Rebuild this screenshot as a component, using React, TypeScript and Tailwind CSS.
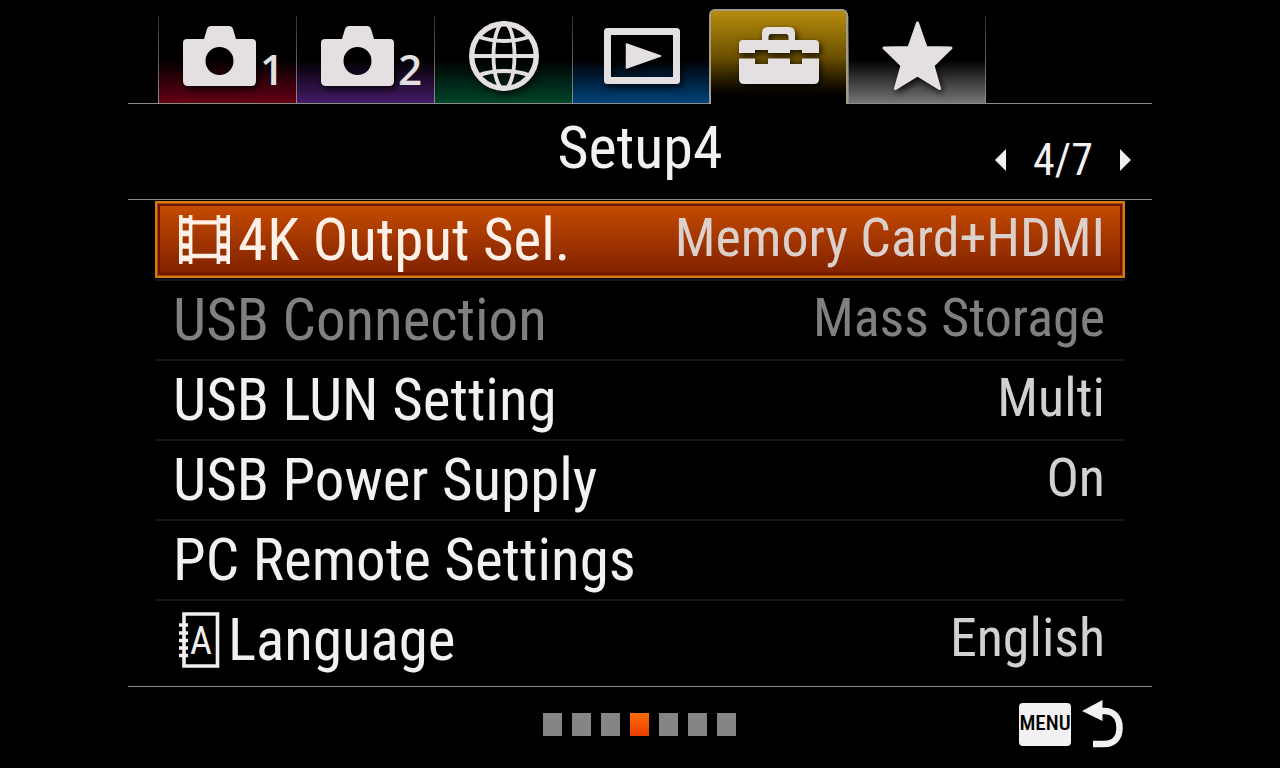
import { useState, type ReactNode } from "react";

const ICON = "drop-shadow-[2px_3px_3px_rgba(0,0,0,0.8)]";
const INK = "#e4e0e2";

function CameraIcon() {
  return (
    <svg width="73" height="60" viewBox="0 0 73 60" className={ICON} aria-hidden="true">
      <path
        fill={INK}
        fillRule="evenodd"
        d="M4 13H21L24 3Q25 0 28 0H46Q49 0 50 3L53 13H69Q73 13 73 17V55Q73 60 68 60H5Q0 60 0 55V17Q0 13 4 13ZM36.5 21A14 14 0 1 0 36.5 49A14 14 0 1 0 36.5 21Z"
      />
    </svg>
  );
}

function GlobeIcon() {
  return (
    <svg width="70" height="70" viewBox="0 0 70 70" fill="none" stroke={INK} strokeWidth="4" className={ICON} aria-hidden="true">
      <circle cx="35" cy="35" r="32.3" strokeWidth="5.4" />
      <ellipse cx="35" cy="35" rx="10.5" ry="33" strokeWidth="3.8" />
      <path d="M3 35H67M9 15.5Q21 20 35 20T61 15.5M9 54.5Q21 50 35 50T61 54.5" />
    </svg>
  );
}

function PlaybackIcon() {
  return (
    <svg width="76" height="56" viewBox="0 0 76 56" className={ICON} aria-hidden="true">
      <rect x="3.5" y="3.5" width="69" height="49" fill="none" stroke={INK} strokeWidth="7" strokeLinejoin="round" />
      <path fill={INK} stroke={INK} strokeWidth="1.5" strokeLinejoin="round" d="M22.5 16L56.5 28L22.5 40Z" />
    </svg>
  );
}

function ToolboxIcon() {
  return (
    <svg width="80" height="57" viewBox="0 0 80 57" fill={INK} className={ICON} aria-hidden="true">
      <path
        fillRule="evenodd"
        d="M23 13V6Q23 0 29 0H50Q56 0 56 6V13H76Q80 13 80 17V26H63V23H51V26H29V23H16V26H0V17Q0 13 4 13ZM29.5 13H49.5V10Q49.5 7 46.5 7H32.5Q29.5 7 29.5 10Z"
      />
      <path d="M0 31.5H16V37H29V31.5H51V37H63V31.5H80V52Q80 57 75 57H5Q0 57 0 52Z" />
    </svg>
  );
}

function StarIcon() {
  return (
    <svg width="73" height="70" viewBox="0 0 73 70" className={ICON} aria-hidden="true">
      <path
        fill={INK}
        stroke={INK}
        strokeWidth="3"
        strokeLinejoin="round"
        d="M36.5 2L45 26.5L70 27L52 44.5L58.5 67.5L36.5 54L14.5 67.5L21 44.5L3 27L28 26.5Z"
      />
    </svg>
  );
}

function FilmIcon() {
  return (
    <svg width="51" height="50" viewBox="0 0 51 50" fill="none" stroke="#fff0e8" className="shrink-0" aria-hidden="true">
      <path strokeWidth="3.6" d="M1.8 0V49M11.6 0V49M39.4 0V49M49.2 0V49" />
      <path strokeWidth="4.4" d="M11 7.4H40M11 41H40" />
      <path strokeWidth="5.6" d="M2 5.8H11M2 18.4H11M2 31H11M2 43.4H11M40 5.8H49M40 18.4H49M40 31H49M40 43.4H49" />
    </svg>
  );
}

function LanguageIcon() {
  return (
    <svg width="41" height="56" viewBox="0 0 41 56" className="shrink-0" aria-hidden="true">
      <path fill="none" stroke="#f0eef0" strokeWidth="3.6" d="M5 2H38.5V54H5Z" />
      <path stroke="#f0eef0" strokeWidth="3.4" d="M0 13H9M0 21H9M0 28.5H9M0 36H9M0 43.5H9" />
      <text x="22" y="42" textAnchor="middle" fill="#f0eef0" className="font-['Roboto_Condensed',Roboto,sans-serif] text-[38px]">
        A
      </text>
    </svg>
  );
}

function ReturnIcon() {
  return (
    <svg width="42" height="48" viewBox="0 0 42 48" aria-hidden="true">
      <path fill="#f2f0f2" d="M0 11L20.5 0V21Z" />
      <path fill="none" stroke="#f2f0f2" strokeWidth="6.5" d="M19 11H22C32 11 37.5 18 37.5 28C37.5 38 32 44 22 44H11" />
    </svg>
  );
}

type Tab = { name: string; icon: ReactNode; digit?: string; tint: string };

const tabs: Tab[] = [
  { name: "Camera Settings 1", icon: <CameraIcon />, digit: "1", tint: "from-[#650014]" },
  { name: "Camera Settings 2", icon: <CameraIcon />, digit: "2", tint: "from-[#451a66]" },
  { name: "Network", icon: <GlobeIcon />, tint: "from-[#00452a]" },
  { name: "Playback", icon: <PlaybackIcon />, tint: "from-[#00437c]" },
  { name: "Setup", icon: <ToolboxIcon />, tint: "" },
  { name: "My Menu", icon: <StarIcon />, tint: "from-[#777577]" },
];

type Item = { label: string; value?: string; icon?: ReactNode; disabled?: boolean };

const items: Item[] = [
  { label: "4K Output Sel.", value: "Memory Card+HDMI", icon: <FilmIcon /> },
  { label: "USB Connection", value: "Mass Storage", disabled: true },
  { label: "USB LUN Setting", value: "Multi" },
  { label: "USB Power Supply", value: "On" },
  { label: "PC Remote Settings" },
  { label: "Language", value: "English", icon: <LanguageIcon /> },
];

function TabBar() {
  return (
    <nav className="flex items-end pt-[9px]">
      <div className="w-[30px] self-stretch border-b border-[#8c8c8c]" />
      {tabs.map((tab) =>
        tab.name === "Setup" ? (
          <button
            key={tab.name}
            aria-label={tab.name}
            aria-current="page"
            className="-ml-px flex h-[95px] w-[139px] items-center justify-center rounded-t-md border-2 border-b-0 border-[#a09c88] bg-linear-to-b from-[#b88c10] via-[#6b5000] to-black pb-1"
          >
            {tab.icon}
          </button>
        ) : (
          <button key={tab.name} aria-label={tab.name} className="flex h-[88px] w-[138px] border-b border-[#8c8c8c]">
            <span className="w-px self-stretch bg-linear-to-b from-[#333] to-[#8c8c8c]" />
            <span
              className={`flex flex-1 items-center gap-1 self-stretch bg-linear-to-t to-transparent to-50% pb-2 ${tab.tint} ${
                tab.digit ? "pl-6" : "justify-center"
              }`}
            >
              {tab.icon}
              {tab.digit && (
                <span className="self-end pb-1.5 font-['Open_Sans','Noto_Sans',sans-serif] text-[42px] leading-10 font-semibold text-[#e4e0e2]">
                  {tab.digit}
                </span>
              )}
            </span>
            {tab.name === "My Menu" && <span className="w-px self-stretch bg-linear-to-b from-[#333] to-[#8c8c8c]" />}
          </button>
        ),
      )}
      <div className="flex-1 self-stretch border-b border-[#8c8c8c]" />
    </nav>
  );
}

function Header() {
  return (
    <header className="grid h-24 grid-cols-3 items-center border-b border-[#8c8c8c] pb-2 text-[#f2f0f2]">
      <h1 className="col-start-2 text-center text-[60px] leading-[80px]">Setup4</h1>
      <div className="mt-6 flex items-center justify-end gap-6 pr-[21px] text-[44px] leading-[60px]">
        <button aria-label="Previous page">
          <svg width="12" height="22" viewBox="0 0 12 22" fill="currentColor" aria-hidden="true">
            <path d="M0 11L11 0V22Z" />
          </svg>
        </button>
        <span className="w-16 text-center">4/7</span>
        <button aria-label="Next page">
          <svg width="12" height="22" viewBox="0 0 12 22" fill="currentColor" aria-hidden="true">
            <path d="M12 11L1 0V22Z" />
          </svg>
        </button>
      </div>
    </header>
  );
}

function Row({ item, selected, last, onSelect }: { item: Item; selected: boolean; last: boolean; onSelect: () => void }) {
  return (
    <li className={`h-20 border-[#161616] ${last ? "" : "border-b-2"}`}>
      <button
        disabled={item.disabled}
        onClick={onSelect}
        className={`flex h-[77px] w-full items-center justify-between border-2 pr-[18px] whitespace-nowrap ${
          item.icon ? "pl-[22px]" : "pl-4"
        } ${
          selected
            ? "border-[#d87c10] bg-linear-to-b from-[#c84c00] to-[#7e2000] shadow-[inset_0_0_0_1px_#a04800,inset_0_0_0_3px_#6a1600]"
            : "border-transparent"
        }`}
      >
        <span
          className={`flex items-center gap-2 text-[59px] leading-[73px] ${
            item.disabled ? "text-[#818081]" : selected ? "text-[#fff0e8]" : "text-[#f2f0f2]"
          }`}
        >
          {item.icon}
          {item.label}
        </span>
        <span
          className={`pb-1 text-[54px] leading-[69px] ${
            item.disabled ? "text-[#818081]" : selected ? "text-[#dcd0cc]" : "text-[#d2d0d2]"
          }`}
        >
          {item.value}
        </span>
      </button>
    </li>
  );
}

export default function App() {
  const [selected, setSelected] = useState(0);
  return (
    <div className="min-h-screen bg-black font-['Roboto_Condensed',Roboto,sans-serif]">
      <div className="mx-auto w-4/5">
        <TabBar />
        <Header />
        <main className="border-b border-[#8c8c8c] pt-px pr-[27px] pb-[5px] pl-[27px]">
          <ul>
            {items.map((item, i) => (
              <Row
                key={item.label}
                item={item}
                selected={i === selected}
                last={i === items.length - 1}
                onSelect={() => setSelected(i)}
              />
            ))}
          </ul>
        </main>
        <footer className="grid grid-cols-3 items-center pt-[13px]">
          <div className="col-start-2 flex justify-center gap-[10px]">
            {[1, 2, 3, 4, 5, 6, 7].map((page) => (
              <button
                key={page}
                aria-label={`Page ${page}`}
                className={`h-[23px] w-[19px] ${page === 4 ? "bg-linear-to-b from-[#ff6c00] to-[#e83c00]" : "bg-[#868486]"}`}
              />
            ))}
          </div>
          <button aria-label="MENU, return" className="flex items-center justify-end gap-[11px] pr-7">
            <span className="flex h-[43px] w-[52px] items-center justify-center rounded-sm bg-[#f2f0f2] text-[21px] font-medium text-black">
              MENU
            </span>
            <ReturnIcon />
          </button>
        </footer>
      </div>
    </div>
  );
}
